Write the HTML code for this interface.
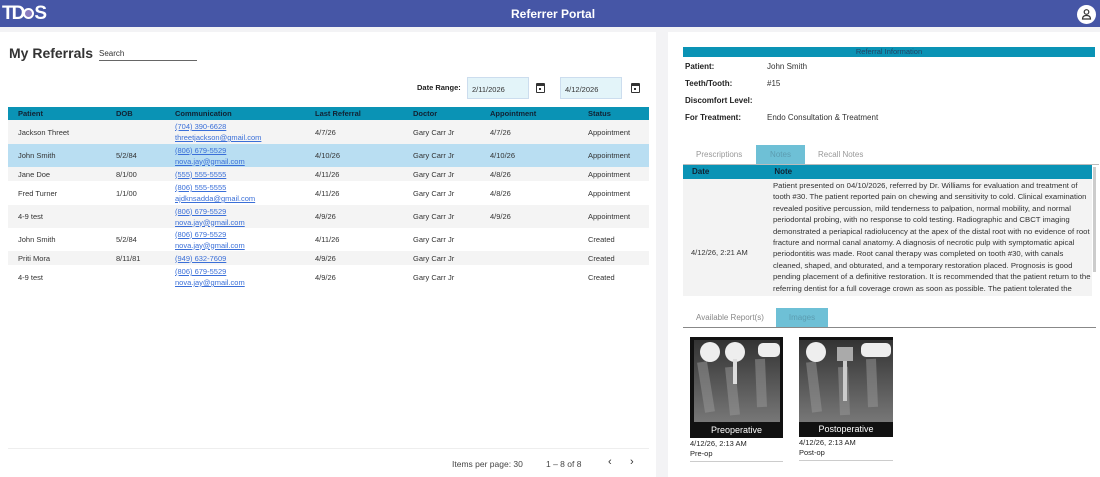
<!DOCTYPE html>
<html><head><style>
*{margin:0;padding:0;box-sizing:border-box}
body{width:1100px;height:477px;overflow:hidden;background:#f3f3f5;font-family:"Liberation Sans",sans-serif;color:#333;position:relative;font-size:8px}
.hdr{position:absolute;left:0;top:0;width:1100px;height:27px;background:#4656a6;color:#fff}
.abs{position:absolute}
a{color:#3a6fd8;text-decoration:underline}
.left{position:absolute;left:0;top:32px;width:656px;height:445px;background:#fff}
.right{position:absolute;left:668px;top:32px;width:432px;height:445px;background:#fff}
table{border-collapse:collapse}
.tb td{font-size:7.5px;color:#333;padding:0;vertical-align:middle;line-height:11px}
.tb tr.h td{background:#0a93b5;color:#123;font-weight:bold;height:13px}
.g td{background:#f4f4f4}
.s td{background:#b9def2}
.w td{background:#fff}
.inp{position:absolute;height:22px;background:#e3f4f9;border:1px solid #cde;font-size:7.5px;padding:7px 4px}
.cal{position:absolute;width:9px;height:10px;border:1.5px solid #333;border-top-width:3px;border-radius:1px}
.cal:after{content:"";position:absolute;left:1.5px;top:2px;width:2px;height:2px;background:#333}
.lbl{font-weight:bold;font-size:8px;color:#222}
.img{position:absolute;background:#111;overflow:hidden}
</style></head><body>
<div class="hdr">
 <div class="abs" style="left:2px;top:3px;font-size:19px;font-weight:bold;letter-spacing:-2px">TD<span style="display:inline-block;width:11px;height:11px;border:2.5px solid #fff;border-radius:50%;background:#8a7cc0;vertical-align:0"></span>S</div>
 <div class="abs" style="left:511px;top:7px;font-size:12px;font-weight:bold">Referrer Portal</div>
 <div class="abs" style="left:1077px;top:5px;width:19px;height:19px;border-radius:50%;background:#fff">
  <svg width="19" height="19" viewBox="0 0 19 19"><circle cx="9.5" cy="7" r="2.3" fill="none" stroke="#333" stroke-width="1.2"/><path d="M5.5 14 Q5.5 10.5 9.5 10.5 Q13.5 10.5 13.5 14 Z" fill="none" stroke="#333" stroke-width="1.2"/></svg>
 </div>
</div>
<div class="left">
 <div class="abs" style="left:9px;top:13px;font-size:14px;font-weight:bold;color:#333">My Referrals</div>
 <div class="abs" style="left:99px;top:17px;font-size:8px;width:98px;border-bottom:1px solid #666;padding-bottom:2px">Search</div>
 <div class="abs lbl" style="left:417px;top:51px;font-size:7.5px">Date Range:</div>
 <div class="inp" style="left:467px;top:45px;width:62px">2/11/2026</div>
 <div class="cal" style="left:536px;top:51px"></div>
 <div class="inp" style="left:560px;top:45px;width:62px">4/12/2026</div>
 <div class="cal" style="left:631px;top:51px"></div>
 <table class="tb abs" style="left:8px;top:75px;width:641px">
  <colgroup><col style="width:108px"><col style="width:59px"><col style="width:140px"><col style="width:98px"><col style="width:77px"><col style="width:98px"><col></colgroup>
  <tr class="h"><td style="padding-left:10px">Patient</td><td>DOB</td><td>Communication</td><td>Last Referral</td><td>Doctor</td><td>Appointment</td><td>Status</td></tr>
  <tr class="g" style="height:24px"><td style="padding-left:10px">Jackson Threet</td><td></td><td><a>(704) 390-6628</a><br><a>threetjackson@gmail.com</a></td><td>4/7/26</td><td>Gary Carr Jr</td><td>4/7/26</td><td>Appointment</td></tr>
  <tr class="s" style="height:23px"><td style="padding-left:10px">John Smith</td><td>5/2/84</td><td><a>(806) 679-5529</a><br><a>nova.jay@gmail.com</a></td><td>4/10/26</td><td>Gary Carr Jr</td><td>4/10/26</td><td>Appointment</td></tr>
  <tr class="g" style="height:14px"><td style="padding-left:10px">Jane Doe</td><td>8/1/00</td><td><a>(555) 555-5555</a></td><td>4/11/26</td><td>Gary Carr Jr</td><td>4/8/26</td><td>Appointment</td></tr>
  <tr class="w" style="height:24px"><td style="padding-left:10px">Fred Turner</td><td>1/1/00</td><td><a>(806) 555-5555</a><br><a>ajdknsadda@gmail.com</a></td><td>4/11/26</td><td>Gary Carr Jr</td><td>4/8/26</td><td>Appointment</td></tr>
  <tr class="g" style="height:23px"><td style="padding-left:10px">4-9 test</td><td></td><td><a>(806) 679-5529</a><br><a>nova.jay@gmail.com</a></td><td>4/9/26</td><td>Gary Carr Jr</td><td>4/9/26</td><td>Appointment</td></tr>
  <tr class="w" style="height:23px"><td style="padding-left:10px">John Smith</td><td>5/2/84</td><td><a>(806) 679-5529</a><br><a>nova.jay@gmail.com</a></td><td>4/11/26</td><td>Gary Carr Jr</td><td></td><td>Created</td></tr>
  <tr class="g" style="height:14px"><td style="padding-left:10px">Priti Mora</td><td>8/11/81</td><td><a>(949) 632-7609</a></td><td>4/9/26</td><td>Gary Carr Jr</td><td></td><td>Created</td></tr>
  <tr class="w" style="height:24px"><td style="padding-left:10px">4-9 test</td><td></td><td><a>(806) 679-5529</a><br><a>nova.jay@gmail.com</a></td><td>4/9/26</td><td>Gary Carr Jr</td><td></td><td>Created</td></tr>
 </table>
 <div class="abs" style="left:8px;top:416px;width:641px;border-top:1px solid #eee"></div>
 <div class="abs" style="left:452px;top:427px;font-size:8.5px;color:#444">Items per page: 30</div>
 <div class="abs" style="left:546px;top:427px;font-size:8.5px;color:#444">1 – 8 of 8</div>
 <div class="abs" style="left:608px;top:424px;font-size:11px;color:#333">‹</div>
 <div class="abs" style="left:630px;top:424px;font-size:11px;color:#333">›</div>
</div>
<div class="right">
 <div class="abs" style="left:15px;top:15px;width:412px;height:10px;background:#0a93b5;text-align:center;font-size:7.5px;color:#246;line-height:10px">Referral Information</div>
 <div class="abs lbl" style="left:17px;top:30px">Patient:</div><div class="abs" style="left:99px;top:30px">John Smith</div>
 <div class="abs lbl" style="left:17px;top:47px">Teeth/Tooth:</div><div class="abs" style="left:99px;top:47px">#15</div>
 <div class="abs lbl" style="left:17px;top:64px">Discomfort Level:</div>
 <div class="abs lbl" style="left:17px;top:81px">For Treatment:</div><div class="abs" style="left:99px;top:81px">Endo Consultation &amp; Treatment</div>
 <div class="abs" style="left:28px;top:118px;color:#999">Prescriptions</div>
 <div class="abs" style="left:88px;top:113px;width:49px;height:19px;background:#6ec0d6;color:#5c9cb0;text-align:center;line-height:19px">Notes</div>
 <div class="abs" style="left:150px;top:118px;color:#999">Recall Notes</div>
 <div class="abs" style="left:15px;top:132px;width:416px;border-top:1px solid #bbb"></div>
 <div class="abs" style="left:15px;top:133px;width:409px;height:14px;background:#0a93b5;font-weight:bold;color:#123;line-height:14px"><span style="margin-left:9px">Date</span><span style="margin-left:65px">Note</span></div>
 <div class="abs" style="left:15px;top:147px;width:409px;height:117px;background:#f3f3f3;overflow:hidden">
  <div class="abs" style="left:8px;top:69px;font-size:7.5px">4/12/26, 2:21 AM</div>
  <div class="abs" style="left:90px;top:1px;width:320px;font-size:7.75px;line-height:11.4px;color:#333">Patient presented on 04/10/2026, referred by Dr. Williams for evaluation and treatment of tooth #30. The patient reported pain on chewing and sensitivity to cold. Clinical examination revealed positive percussion, mild tenderness to palpation, normal mobility, and normal periodontal probing, with no response to cold testing. Radiographic and CBCT imaging demonstrated a periapical radiolucency at the apex of the distal root with no evidence of root fracture and normal canal anatomy. A diagnosis of necrotic pulp with symptomatic apical periodontitis was made. Root canal therapy was completed on tooth #30, with canals cleaned, shaped, and obturated, and a temporary restoration placed. Prognosis is good pending placement of a definitive restoration. It is recommended that the patient return to the referring dentist for a full coverage crown as soon as possible. The patient tolerated the procedure well and was given post-operative instructions.</div>
 </div>
 <div class="abs" style="left:425px;top:135px;width:3px;height:105px;background:#ccc"></div>
 <div class="abs" style="left:28px;top:281px;color:#888">Available Report(s)</div>
 <div class="abs" style="left:108px;top:276px;width:52px;height:19px;background:#6ec0d6;color:#5c9cb0;text-align:center;line-height:19px">Images</div>
 <div class="abs" style="left:15px;top:295px;width:413px;border-top:1px solid #888"></div>
 <div class="img" style="left:22px;top:305px;width:93px;height:101px">
  <svg width="93" height="101"><defs><linearGradient id="xg" x1="0" y1="0" x2="0" y2="1"><stop offset="0" stop-color="#333"/><stop offset="1" stop-color="#777"/></linearGradient></defs><rect x="4" y="3" width="86" height="82" fill="url(#xg)"/><path d="M12 25 L20 75 M40 30 L45 78 M70 22 L72 70" stroke="#999" stroke-width="10" opacity=".5"/><ellipse cx="20" cy="15" rx="10" ry="10" fill="#eee"/><ellipse cx="45" cy="15" rx="10" ry="10" fill="#eee"/><rect x="43" y="22" width="4" height="25" fill="#ddd"/><rect x="68" y="6" width="22" height="14" rx="5" fill="#eee"/></svg>
  <div class="abs" style="left:0;top:88px;width:93px;text-align:center;color:#fff;font-size:9px">Preoperative</div>
 </div>
 <div class="abs" style="left:22px;top:407px;font-size:7.5px;color:#222;width:93px;line-height:10px;border-bottom:1px solid #ccc;padding-bottom:2px">4/12/26, 2:13 AM<br>Pre-op</div>
 <div class="img" style="left:131px;top:305px;width:94px;height:100px">
  <svg width="94" height="100"><rect x="0" y="3" width="94" height="82" fill="url(#xg)"/><path d="M12 25 L18 75 M44 30 L46 78 M72 22 L74 70" stroke="#999" stroke-width="10" opacity=".5"/><ellipse cx="17" cy="15" rx="10" ry="10" fill="#eee"/><rect x="38" y="10" width="16" height="14" fill="#aaa"/><rect x="44" y="24" width="4" height="40" fill="#ccc"/><rect x="62" y="6" width="30" height="14" rx="5" fill="#eee"/></svg>
  <div class="abs" style="left:0;top:87px;width:94px;text-align:center;color:#fff;font-size:9px">Postoperative</div>
 </div>
 <div class="abs" style="left:131px;top:406px;font-size:7.5px;color:#222;width:94px;line-height:10px;border-bottom:1px solid #ccc;padding-bottom:2px">4/12/26, 2:13 AM<br>Post-op</div>
</div>
</body></html>
